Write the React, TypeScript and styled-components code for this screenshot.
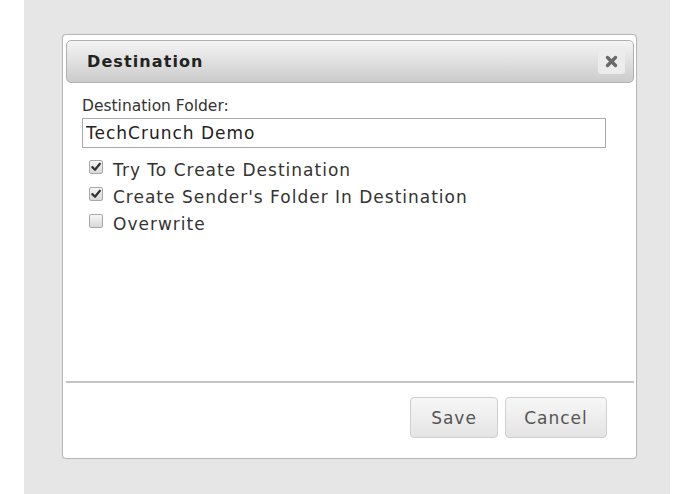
import React from 'react';
import styled, { createGlobalStyle } from 'styled-components';

const GlobalStyle = createGlobalStyle`
  html, body {
    margin: 0;
    padding: 0;
    background: #ffffff;
    font-family: "DejaVu Sans", Verdana, sans-serif;
  }
`;

const Backdrop = styled.div`
  margin-left: 24px;
  width: 646px;
  height: 494px;
  box-sizing: border-box;
  background: #e6e6e6;
  padding: 34px 0 0 38px;
`;

const Dialog = styled.div`
  width: 575px;
  height: 425px;
  box-sizing: border-box;
  background: #ffffff;
  border: 1px solid #b8b8b8;
  border-radius: 4px;
  box-shadow: 0 0 1px rgba(0, 0, 0, 0.15);
  padding: 5px 2px 0 3px;
  display: flex;
  flex-direction: column;
`;

const Header = styled.div`
  height: 43px;
  box-sizing: border-box;
  border: 1px solid #b0b0b0;
  border-radius: 5px;
  background: linear-gradient(to bottom, #f4f4f4 0%, #e0e0e0 50%, #cbcbcb 100%);
  display: flex;
  align-items: center;
  justify-content: space-between;
  padding: 0 8px 0 20px;
`;

const Title = styled.div`
  font-size: 16px;
  font-weight: bold;
  letter-spacing: 1.1px;
  color: #222222;
`;

const CloseButton = styled.button`
  width: 27px;
  height: 25px;
  border: none;
  border-radius: 3px;
  background: #ececec;
  display: flex;
  align-items: center;
  justify-content: center;
  padding: 0;
  cursor: pointer;
`;

const Body = styled.div`
  flex: 1;
  padding: 14px 24px 0 16px;
`;

const FieldLabel = styled.div`
  font-size: 15.5px;
  color: #333333;
  line-height: 19px;
  height: 19px;
  margin-bottom: 2px;
`;

const TextInput = styled.input`
  display: block;
  width: 524px;
  height: 30px;
  box-sizing: border-box;
  border: 1px solid #aaaaaa;
  padding: 0 3px;
  font-family: "DejaVu Sans", Verdana, sans-serif;
  font-size: 17px;
  letter-spacing: 1px;
  color: #222222;
  outline: none;
`;

const Options = styled.div`
  margin-top: 8px;
  display: flex;
  flex-direction: column;
`;

const OptionRow = styled.label`
  display: flex;
  align-items: center;
  height: 27px;
  padding-left: 7px;
  font-size: 17px;
  letter-spacing: 1px;
  color: #333333;
  cursor: pointer;
`;

const Box = styled.span<{ $checked: boolean }>`
  width: 12px;
  height: 12px;
  margin-right: 10px;
  margin-top: -6px;
  border: 1px solid #a8a8a8;
  border-radius: 2px;
  background: linear-gradient(to bottom, #f6f6f6, #d8d8d8);
  display: flex;
  align-items: center;
  justify-content: center;
  flex-shrink: 0;
`;

const Footer = styled.div`
  border-top: 2px solid #c4c4c4;
  height: 77px;
  box-sizing: border-box;
  display: flex;
  justify-content: flex-end;
  align-items: flex-start;
  gap: 7px;
  padding: 14px 27px 0 0;
`;

const Button = styled.button<{ $width: number }>`
  width: ${(p) => p.$width}px;
  height: 41px;
  border: 1px solid #cfcfcf;
  border-radius: 4px;
  background: linear-gradient(to bottom, #f7f7f7, #e4e4e4);
  font-family: "DejaVu Sans", Verdana, sans-serif;
  font-size: 17px;
  letter-spacing: 1px;
  color: #555555;
  cursor: pointer;
`;

const CheckMark = () => (
  <svg width="10" height="10" viewBox="0 0 9 9">
    <path d="M1.2 4.6 L3.6 7 L8 1.6" fill="none" stroke="#333" strokeWidth="2" strokeLinecap="round" strokeLinejoin="round" />
  </svg>
);

const CloseIcon = () => (
  <svg width="13" height="13" viewBox="0 0 13 13">
    <path d="M2.5 2.5 L10.5 10.5 M10.5 2.5 L2.5 10.5" stroke="#6a6a6a" strokeWidth="3.4" strokeLinecap="round" />
  </svg>
);

const options = [
  { label: 'Try To Create Destination', checked: true },
  { label: "Create Sender's Folder In Destination", checked: true },
  { label: 'Overwrite', checked: false },
];

const App: React.FC = () => {
  return (
    <>
      <GlobalStyle />
      <Backdrop>
        <Dialog>
          <Header>
            <Title>Destination</Title>
            <CloseButton>
              <CloseIcon />
            </CloseButton>
          </Header>
          <Body>
            <FieldLabel>Destination Folder:</FieldLabel>
            <TextInput defaultValue="TechCrunch Demo" />
            <Options>
              {options.map((o) => (
                <OptionRow key={o.label}>
                  <Box $checked={o.checked}>{o.checked && <CheckMark />}</Box>
                  {o.label}
                </OptionRow>
              ))}
            </Options>
          </Body>
          <Footer>
            <Button $width={88}>Save</Button>
            <Button $width={102}>Cancel</Button>
          </Footer>
        </Dialog>
      </Backdrop>
    </>
  );
};

export default App;
